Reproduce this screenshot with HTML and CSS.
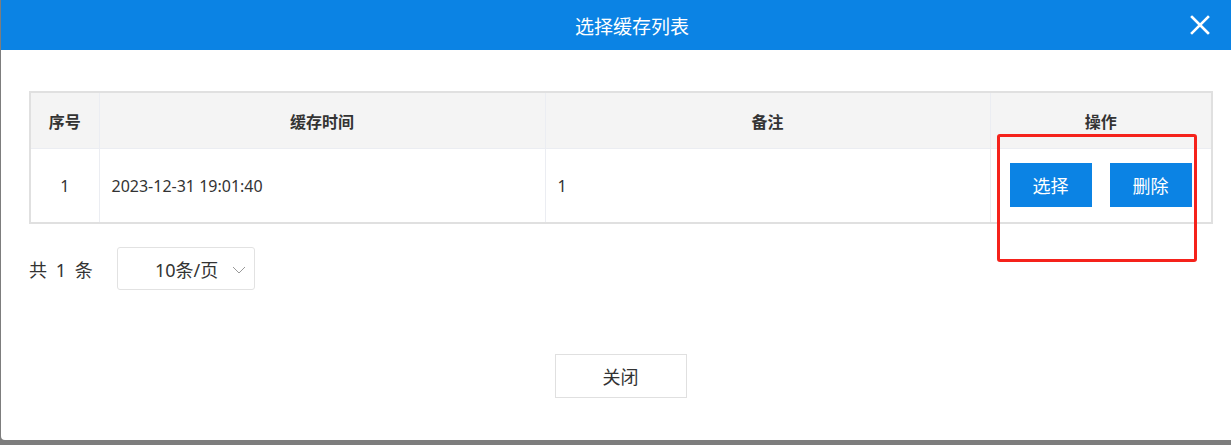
FILE: index.html
```html
<!DOCTYPE html>
<html lang="zh">
<head>
<meta charset="utf-8">
<link rel="stylesheet" href="styles.css">
</head>
<body>
<div class="modal">
  <div class="modal-header">
    <div class="modal-title">选择缓存列表</div>
    <span class="close-x">
      <svg width="20" height="20" viewBox="0 0 20 20"><path d="M2 2 L18 18 M18 2 L2 18" stroke="#fff" stroke-width="2.6" stroke-linecap="square"/></svg>
    </span>
  </div>
  <div class="modal-body">
    <table class="grid">
      <colgroup>
        <col class="c1"><col class="c2"><col class="c3"><col class="c4">
      </colgroup>
      <thead>
        <tr><th>序号</th><th>缓存时间</th><th>备注</th><th>操作</th></tr>
      </thead>
      <tbody>
        <tr>
          <td class="center">1</td>
          <td>2023-12-31 19:01:40</td>
          <td>1</td>
          <td class="ops"><div class="ops-wrap"><button class="btn-blue">选择</button><button class="btn-blue">删除</button></div></td>
        </tr>
      </tbody>
    </table>
    <div class="pager">
      <span class="total">共 1 条</span>
      <div class="size-select">
        <span>10条/页</span>
        <svg width="14" height="10" viewBox="0 0 14 10"><path d="M1 2 L7 8 L13 2" fill="none" stroke="#999" stroke-width="1"/></svg>
      </div>
    </div>
    <div class="footer">
      <button class="btn-plain">关闭</button>
    </div>
    <div class="annot"></div>
  </div>
</div>
</body>
</html>
```

FILE: styles.css
```css
html, body {
  margin: 0;
  padding: 0;
}
body {
  background: #7d7d7d;
  font-family: "Noto Sans", "Noto Sans CJK SC", sans-serif;
  width: 1231px;
  height: 445px;
  overflow: hidden;
}
.modal {
  margin-left: 1px;
  width: 1230px;
  height: 440px;
  background: #fff;
  border-bottom-left-radius: 4px;
  position: relative;
}
.modal-header {
  height: 50px;
  background: #0b83e4;
  display: flex;
  align-items: center;
  justify-content: center;
  position: relative;
}
.modal-title {
  color: #fff;
  font-size: 19px;
  margin-left: 32px;
  font-family: "Noto Sans CJK SC", sans-serif;
}
.close-x {
  position: absolute;
  right: 21px;
  top: 15px;
  width: 20px;
  height: 20px;
  display: block;
}
.close-x svg { display: block; }
.modal-body {
  padding: 41px 19px 0 28px;
  position: relative;
}
.grid {
  width: 1182px;
  border-collapse: collapse;
  border: 2px solid #e0e0e0;
  table-layout: fixed;
  font-size: 16px;
  color: #333;
}
.c1 { width: 69px; }
.c2 { width: 446px; }
.c3 { width: 445px; }
.c4 { width: 222px; }
.grid th {
  background: #f4f4f4;
  height: 55px;
  font-weight: bold;
  color: #333;
  text-align: center;
  border-left: 1px solid #ebedf2;
  border-bottom: 1px solid #ebedf2;
  padding: 0;
}
.grid td {
  height: 73px;
  padding: 0 12px;
  border-left: 1px solid #ebedf2;
  color: #333;
}
.grid th:first-child, .grid td:first-child { border-left: none; }
.grid td.center { text-align: center; padding: 0; }
.grid td.ops { padding: 0 0 0 19px; }
.ops-wrap {
  display: flex;
  gap: 18px;
}
.btn-blue {
  width: 82px;
  height: 44px;
  background: #0b83e4;
  color: #fff;
  border: none;
  font-family: "Noto Sans CJK SC", sans-serif;
  font-size: 18px;
  padding: 0;
  margin-bottom: 1px;
}
.pager {
  display: flex;
  align-items: center;
  margin-top: 23px;
  height: 43px;
}
.total {
  font-size: 18px;
  color: #333;
  margin-left: 0;
  width: 88px;
  word-spacing: 4px;
}
.size-select {
  width: 136px;
  height: 41px;
  border: 1px solid #e2e2e2;
  border-radius: 3px;
  display: flex;
  align-items: center;
  font-size: 18px;
  color: #333;
}
.size-select span { margin-left: 37px; width: 77px; }
.size-select svg { display: block; margin-top: 3px; }
.footer {
  display: flex;
  justify-content: center;
  margin-top: 64px;
}
.btn-plain {
  width: 132px;
  height: 44px;
  background: #fff;
  border: 1px solid #e0e0e0;
  font-family: "Noto Sans CJK SC", sans-serif;
  font-size: 18px;
  color: #333;
  padding: 0;
}
.annot {
  position: absolute;
  left: 996px;
  top: 84px;
  width: 194px;
  height: 122px;
  border: 3px solid #f5221b;
  border-radius: 3px;
  pointer-events: none;
}
```
